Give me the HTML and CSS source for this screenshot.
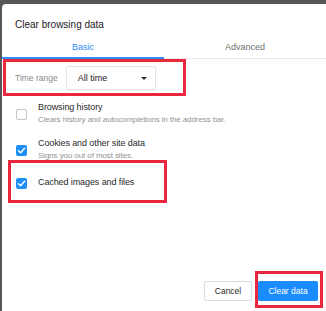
FILE: index.html
```html
<!DOCTYPE html>
<html lang="en">
<head>
    <meta charset="UTF-8">
    <title>Clear browsing data</title>
    <link rel="stylesheet" href="styles.css">
</head>
<body>
    <div class="dialog">
        <div class="dialog-title">Clear browsing data</div>

        <div class="tab-container">
            <button class="tab-button active">Basic</button>
            <button class="tab-button">Advanced</button>
        </div>

        <div class="time-row">
            <span class="time-label">Time range</span>
            <div class="select">
                <span>All time</span>
                <span class="select-arrow"></span>
            </div>
        </div>

        <div class="option-list">
            <div class="option">
                <span class="checkbox"></span>
                <div class="option-text">
                    <div class="option-title">Browsing history</div>
                    <div class="option-sub">Clears history and autocompletions in the address bar.</div>
                </div>
            </div>
            <div class="option">
                <span class="checkbox checked">
                    <svg viewBox="0 0 12 12" width="11" height="11"><path d="M2.6 6.2 L5 8.4 L9.4 3.6" fill="none" stroke="#fff" stroke-width="1.6" stroke-linecap="round" stroke-linejoin="round"/></svg>
                </span>
                <div class="option-text">
                    <div class="option-title">Cookies and other site data</div>
                    <div class="option-sub">Signs you out of most sites.</div>
                </div>
            </div>
            <div class="option single">
                <span class="checkbox checked">
                    <svg viewBox="0 0 12 12" width="11" height="11"><path d="M2.6 6.2 L5 8.4 L9.4 3.6" fill="none" stroke="#fff" stroke-width="1.6" stroke-linecap="round" stroke-linejoin="round"/></svg>
                </span>
                <div class="option-text">
                    <div class="option-title">Cached images and files</div>
                </div>
            </div>
        </div>

        <div class="dialog-footer">
            <button class="btn btn-cancel">Cancel</button>
            <button class="btn btn-primary">Clear data</button>
        </div>

        <!-- annotation boxes drawn over the dialog -->
        <div class="mark mark-time"></div>
        <div class="mark mark-cache"></div>
        <div class="mark mark-clear"></div>
    </div>
</body>
</html>
```

FILE: styles.css
```css
/* Page backdrop: a dark strip shows along the top and left */
html, body {
    height: 100%;
    margin: 0;
    padding: 0;
    overflow: hidden;
    background-color: #575757;
    font-family: 'Liberation Sans', Arial, sans-serif;
}
.dialog {
    position: relative;
    display: flex;
    flex-direction: column;
    box-sizing: border-box;
    height: calc(100% - 4px);
    margin: 4px 0 0 2px;
    background-color: #ffffff;
    border-top-left-radius: 4px;
}
.dialog-title {
    padding: 14px 0 0 13px;
    font-size: 10px;
    line-height: 14px;
    color: #202124;
}
/* Tabs */
.tab-container {
    display: flex;
    margin-top: 4px;
    border-bottom: 1px solid #e8e8e8;
}
.tab-button {
    flex: 1;
    height: 23px;
    padding: 0;
    border: none;
    border-bottom: 2px solid transparent;
    margin-bottom: -1px;
    background-color: transparent;
    font-family: inherit;
    font-size: 9px;
    color: #6f6f6f;
}
.tab-button.active {
    color: #2b8ef3;
    border-bottom-color: #2b8ef3;
}
/* Time range */
.time-row {
    display: flex;
    align-items: center;
    gap: 8px;
    padding: 7px 0 0 13px;
}
.time-label {
    font-size: 8.5px;
    color: #8a8a8a;
}
.select {
    display: flex;
    align-items: center;
    justify-content: space-between;
    box-sizing: border-box;
    width: 90px;
    height: 24px;
    padding: 0 8px 0 11px;
    border: 1px solid #e3e3e3;
    border-radius: 2px;
    box-shadow: 0 1px 1px rgba(0, 0, 0, 0.05);
    font-size: 9px;
    color: #222222;
}
.select-arrow {
    width: 0;
    height: 0;
    border-left: 3px solid transparent;
    border-right: 3px solid transparent;
    border-top: 3px solid #333333;
}
/* Checkbox options */
.option-list {
    display: flex;
    flex-direction: column;
    gap: 11px;
    padding: 11px 0 0 14px;
}
.option {
    display: flex;
    align-items: center;
    gap: 11px;
}
.option.single {
    margin-top: 3px;
}
.checkbox {
    display: flex;
    align-items: center;
    justify-content: center;
    box-sizing: border-box;
    width: 11px;
    height: 11px;
    border: 1px solid #c4c4c4;
    border-radius: 2px;
    margin-top: 1px;
}
.checkbox.checked {
    border: none;
    background-color: #1e8ff7;
}
.option-title {
    font-size: 9px;
    line-height: 13px;
    letter-spacing: -0.1px;
    color: #2a2a2a;
}
.option-sub {
    font-size: 8px;
    line-height: 12px;
    letter-spacing: -0.1px;
    color: #939393;
}
/* Footer buttons */
.dialog-footer {
    display: flex;
    justify-content: flex-end;
    gap: 6px;
    margin-top: auto;
    padding: 0 8px 10px 0;
}
.btn {
    box-sizing: border-box;
    height: 20px;
    padding: 0;
    border-radius: 2px;
    font-family: inherit;
    font-size: 8.5px;
}
.btn-cancel {
    width: 48px;
    border: 1px solid #dcdcdc;
    background-color: #ffffff;
    color: #2a2a2a;
}
.btn-primary {
    width: 60px;
    border: none;
    background-color: #1a8cff;
    color: #ffffff;
}
/* Red annotation rectangles */
.mark {
    position: absolute;
    box-sizing: border-box;
    border: 3px solid #e8283e;
}
.mark-time {
    left: 1px;
    top: 55px;
    width: 183px;
    height: 37px;
}
.mark-cache {
    left: 6px;
    top: 156px;
    width: 159px;
    height: 43px;
}
.mark-clear {
    left: 253px;
    top: 267px;
    width: 68px;
    height: 37px;
}
```
